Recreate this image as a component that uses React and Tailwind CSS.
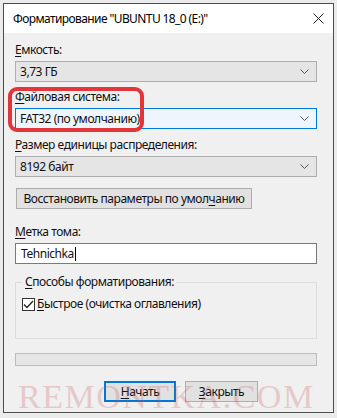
import React from "react";

function Chevron() {
  return (
    <svg width="9" height="5" viewBox="0 0 9 5" className="shrink-0">
      <polyline points="0.5,0.5 4.5,4.5 8.5,0.5" fill="none" stroke="#555" strokeWidth="1" />
    </svg>
  );
}

function Label({ u, rest, className = "" }) {
  return (
    <div className={"h-[16px] leading-[16px] whitespace-nowrap " + className}>
      <span className="underline underline-offset-2 decoration-1">{u}</span>
      {rest}
    </div>
  );
}

function Select({ value, focused }) {
  return (
    <div
      className={
        "mt-[3px] w-[302px] h-[21px] flex items-center justify-between pl-[4px] pr-[7px] border " +
        (focused ? "border-[#0078d7] bg-[#eef5fc]" : "border-[#adadad] bg-[#e5e5e5]")
      }
    >
      <span className="leading-[16px] whitespace-nowrap">{value}</span>
      <Chevron />
    </div>
  );
}

export default function App() {
  return (
    <div className="relative w-[337px] h-[418px] bg-[#ebebeb] pt-[3px] pl-[3px] pr-[3px] pb-[5px] font-['Noto_Sans',sans-serif] text-[12px] tracking-[-0.45px] text-[#111] overflow-hidden">
      <div className="h-[410px] w-[331px] border border-[#4d4d4d] bg-[#f0f0f0] flex flex-col">
        <div className="h-[29px] bg-white flex items-center justify-between pl-[9px] pr-[9px] shrink-0">
          <span className="text-[12px] tracking-[-0.6px] text-black whitespace-nowrap">Форматирование "UBUNTU 18_0 (E:)"</span>
          <svg width="11" height="11" viewBox="0 0 11 11">
            <path d="M0.5 0.5 L10.5 10.5 M10.5 0.5 L0.5 10.5" stroke="#222" strokeWidth="1" />
          </svg>
        </div>
        <div className="pl-[11px] flex flex-col">
          <Label u="Е" rest="мкость:" className="mt-[9px]" />
          <Select value="3,73 ГБ" />
          <Label u="Ф" rest="айловая система:" className="mt-[7px]" />
          <Select value="FAT32 (по умолчанию)" focused />
          <Label u="Р" rest="азмер единицы распределения:" className="mt-[8px]" />
          <Select value="8192 байт" />
          <div className="mt-[11px] ml-[1px] w-[236px] h-[21px] border border-[#adadad] bg-[#e1e1e1] flex items-center justify-center">
            <span className="whitespace-nowrap">
              Восстановить параметры по умол<span className="underline underline-offset-2">ч</span>анию
            </span>
          </div>
          <Label u="М" rest="етка тома:" className="mt-[15px]" />
          <div className="mt-[3px] w-[302px] h-[21px] border border-[#7a7a7a] bg-white flex items-center pl-[5px]">
            <span>Tehnichka</span>
            <span className="ml-[1px] w-[1px] h-[14px] bg-black" />
          </div>
          <fieldset className="mt-[10px] w-[302px] h-[65px] border border-[#dcdcdc] pl-[6px]">
            <legend className="px-[2px] ml-[1px] leading-[16px] whitespace-nowrap">
              <span className="underline underline-offset-2">С</span>пособы форматирования:
            </legend>
            <div className="mt-[6px] flex items-center">
              <div className="w-[13px] h-[13px] border border-[#333] bg-white flex items-center justify-center">
                <svg width="11" height="9" viewBox="0 0 11 9">
                  <polyline points="1,4.5 4,7.5 10,1" fill="none" stroke="#222" strokeWidth="1.3" />
                </svg>
              </div>
              <span className="ml-[2px] leading-[16px] whitespace-nowrap">
                <span className="underline underline-offset-2">Б</span>ыстрое (очистка оглавления)
              </span>
            </div>
          </fieldset>
          <div className="mt-[14px] w-[302px] h-[13px] border border-[#bcbcbc] bg-[#e6e6e6]" />
          <div className="mt-[15px] flex gap-[9px] pl-[89px]">
            <div className="w-[72px] h-[21px] border-2 border-[#0078d7] bg-[#e1e1e1] flex items-center justify-center">
              <span>
                <span className="underline underline-offset-2">Н</span>ачать
              </span>
            </div>
            <div className="w-[73px] h-[21px] border border-[#adadad] bg-[#e1e1e1] flex items-center justify-center">
              <span>
                <span className="underline underline-offset-2">З</span>акрыть
              </span>
            </div>
          </div>
        </div>
      </div>
      <div className="absolute left-[8px] top-[87px] w-[136px] h-[45px] border-[4px] border-[#e2363a] rounded-[9px]" />
      <div className="absolute left-[18px] top-[380px] text-[34px] leading-[34px] tracking-[1.5px] font-['Liberation_Serif',serif] text-[#c65858] opacity-25 pointer-events-none">
        REMONTKA.COM
      </div>
    </div>
  );
}
